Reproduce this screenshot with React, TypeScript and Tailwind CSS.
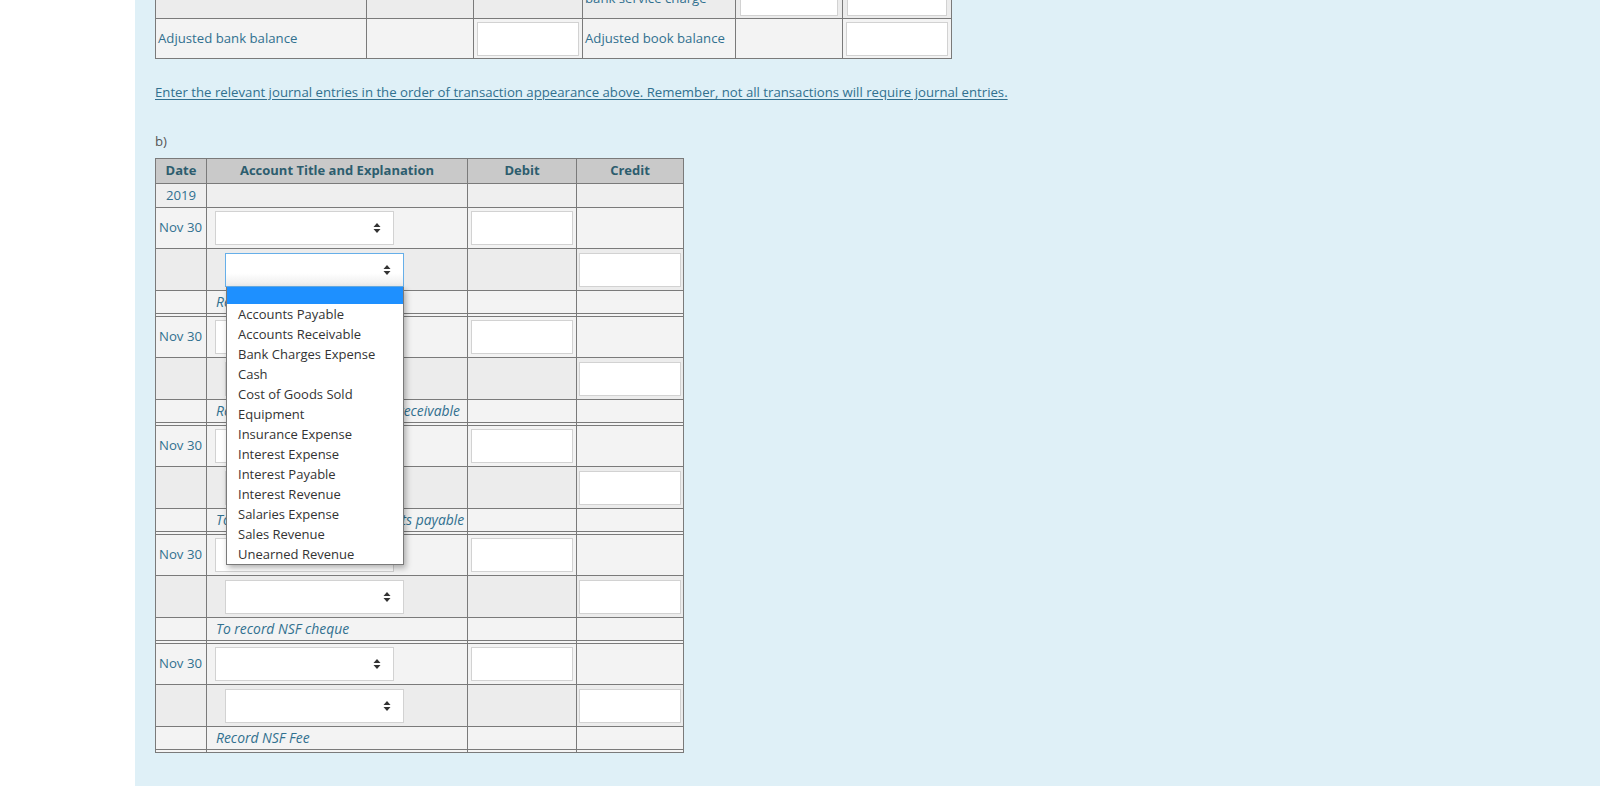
import clsx from "clsx";

const accounts = [
    "Accounts Payable",
    "Accounts Receivable",
    "Bank Charges Expense",
    "Cash",
    "Cost of Goods Sold",
    "Equipment",
    "Insurance Expense",
    "Interest Expense",
    "Interest Payable",
    "Interest Revenue",
    "Salaries Expense",
    "Sales Revenue",
    "Unearned Revenue",
];

const entries = [
    "Record bank service charge",
    "Record collection of accounts receivable",
    "To record payments of accounts payable",
    "To record NSF cheque",
    "Record NSF Fee",
];

const cell = "border border-[#7a7a7a] p-0";

const SortIcon = () => (
    <svg width="8" height="12" viewBox="0 0 8 12" className="shrink-0">
        <path d="M0.5 5 L4 1 L7.5 5 Z" fill="#333" />
        <path d="M0.5 7 L4 11 L7.5 7 Z" fill="#333" />
    </svg>
);

const FakeSelect = ({ focused = false, indent = false }: { focused?: boolean; indent?: boolean }) => (
    <div
        className={clsx(
            "h-[34px] w-[179px] flex items-center justify-end pr-[12px] border",
            indent ? "ml-[18px]" : "ml-[8px]",
            focused
                ? "border-[#66afe9] bg-gradient-to-b from-white from-60% to-[#ececec]"
                : "border-[#d2d2d2] bg-white"
        )}
    >
        <SortIcon />
    </div>
);

const TextBox = ({ w = "w-[102px]" }: { w?: string }) => (
    <div className={clsx("h-[34px] bg-white border border-[#d2d2d2] mx-auto", w)} />
);

const DropdownList = () => (
    <div className="absolute left-[71px] top-[129px] w-[178px] bg-white border border-[#7a7a7a] border-t-0 shadow-[2px_3px_6px_rgba(0,0,0,0.3)] z-10">
        <div className="h-[17px] bg-[#1e90ff]" />
        {accounts.map(a => (
            <div key={a} className="h-[20px] leading-[20px] pl-[11px] text-[13px] text-[#333]">
                {a}
            </div>
        ))}
    </div>
);

const App = () => {
    return (
        <div className="w-[1606px] h-[796px] bg-white overflow-hidden font-['Open_Sans',sans-serif] text-[13.2px] text-[#31708f]">
            <div className="ml-[135px] w-[1465px] h-[786px] bg-[#dff0f7] overflow-hidden px-[20px]">
                {/* bank reconciliation tail, scrolled */}
                <div className="-mt-[22px]">
                    <table className="border-collapse border border-[#333] w-[796px] table-fixed">
                        <colgroup>
                            <col className="w-[211px]" />
                            <col className="w-[107px]" />
                            <col className="w-[109px]" />
                            <col className="w-[153px]" />
                            <col className="w-[107px]" />
                            <col className="w-[109px]" />
                        </colgroup>
                        <tbody>
                            <tr className="h-[40px] bg-[#ececec]">
                                <td className={cell} />
                                <td className={cell} />
                                <td className={cell} />
                                <td className={clsx(cell, "px-[2px]")}>bank service charge</td>
                                <td className={clsx(cell, "px-[4px]")}>
                                    <TextBox w="w-full" />
                                </td>
                                <td className={clsx(cell, "px-[4px]")}>
                                    <TextBox w="w-full" />
                                </td>
                            </tr>
                            <tr className="h-[40px] bg-[#f3f3f3]">
                                <td className={clsx(cell, "px-[2px]")}>Adjusted bank balance</td>
                                <td className={cell} />
                                <td className={clsx(cell, "px-[3px]")}>
                                    <TextBox w="w-full" />
                                </td>
                                <td className={clsx(cell, "px-[2px]")}>Adjusted book balance</td>
                                <td className={cell} />
                                <td className={clsx(cell, "px-[3px]")}>
                                    <TextBox w="w-full" />
                                </td>
                            </tr>
                        </tbody>
                    </table>
                </div>

                <p className="mt-[24px] leading-[18px] underline underline-offset-2 text-[#31708f]">
                    Enter the relevant journal entries in the order of transaction appearance above. Remember,
                    not all transactions will require journal entries.
                </p>

                <p className="mt-[31px] leading-[18px] text-[#555]">b)</p>

                <div className="relative mt-[8px] w-[528px]">
                    <table className="border-collapse border border-[#333] w-[528px] table-fixed">
                        <colgroup>
                            <col className="w-[51px]" />
                            <col className="w-[261px]" />
                            <col className="w-[109px]" />
                            <col className="w-[107px]" />
                        </colgroup>
                        <thead>
                            <tr className="h-[25px] bg-[#c9c9c9] text-[#2d5d6e] font-bold text-[13px]">
                                <th className={cell}>Date</th>
                                <th className={cell}>Account Title and Explanation</th>
                                <th className={cell}>Debit</th>
                                <th className={cell}>Credit</th>
                            </tr>
                        </thead>
                        <tbody>
                            <tr className="h-[24px] bg-[#efefef]">
                                <td className={clsx(cell, "text-center")}>2019</td>
                                <td className={cell} />
                                <td className={cell} />
                                <td className={cell} />
                            </tr>
                            {entries.map((exp, i) => (
                                <EntryRows key={exp} explanation={exp} focused={i === 0} />
                            ))}
                        </tbody>
                    </table>
                    <DropdownList />
                </div>
            </div>
        </div>
    );
};

const EntryRows = ({ explanation, focused }: { explanation: string; focused: boolean }) => (
    <>
        <tr className="h-[41px] bg-[#f3f3f3]">
            <td className={clsx(cell, "pl-[3px] whitespace-nowrap")}>Nov 30</td>
            <td className={cell}>
                <FakeSelect />
            </td>
            <td className={cell}>
                <TextBox />
            </td>
            <td className={cell} />
        </tr>
        <tr className="h-[42px] bg-[#ececec]">
            <td className={cell} />
            <td className={cell}>
                <FakeSelect indent focused={focused} />
            </td>
            <td className={cell} />
            <td className={cell}>
                <TextBox />
            </td>
        </tr>
        <tr className="h-[23px] bg-[#f3f3f3]">
            <td className={cell} />
            <td className={clsx(cell, "pl-[9px] italic text-[13.9px] whitespace-nowrap overflow-hidden")}>
                {explanation}
            </td>
            <td className={cell} />
            <td className={cell} />
        </tr>
        <tr className="h-[3px] bg-[#f4f4f4]">
            <td className={cell} />
            <td className={cell} />
            <td className={cell} />
            <td className={cell} />
        </tr>
    </>
);

export default App;
